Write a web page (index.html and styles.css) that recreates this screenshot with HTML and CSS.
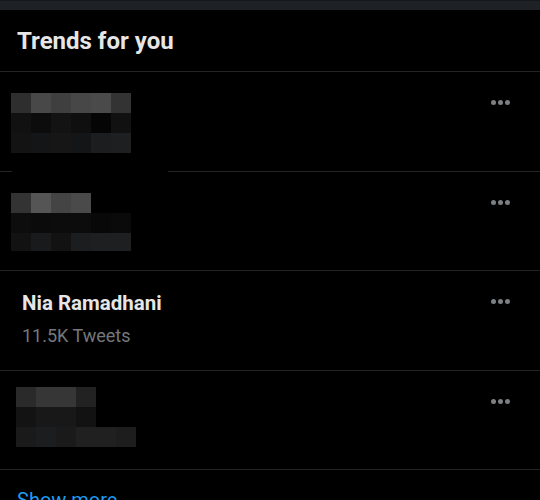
FILE: index.html
```html
<!DOCTYPE html>
<html>
<head>
<meta charset="utf-8">
<link rel="stylesheet" href="styles.css">
</head>
<body>
<div class="topbar"></div>
<div class="header"><h2 class="title">Trends for you</h2></div>
<div class="divider"></div>

<div class="row">
  <div class="mosaic m1">
    <i class="s2e"></i><i class="s48"></i><i class="s3f"></i><i class="s47"></i><i class="s4a"></i><i class="s33"></i>
    <i class="s11"></i><i class="s0c"></i><i class="s13"></i><i class="s0f"></i><i class="s05"></i><i class="s11"></i>
    <i class="s13"></i><i class="s14"></i><i class="s16"></i><i class="s14"></i><i class="s1c"></i><i class="s1e"></i>
  </div>
  <div class="more"><span></span><span></span><span></span></div>
</div>
<div class="divider split"><i></i><i></i></div>

<div class="row">
  <div class="mosaic m2">
    <i class="s33"></i><i class="s55"></i><i class="s44"></i><i class="s4a"></i><i class="s00"></i><i class="s00"></i>
    <i class="s0d"></i><i class="s0b"></i><i class="s0c"></i><i class="s0c"></i><i class="s08"></i><i class="s0a"></i>
    <i class="s12"></i><i class="s19"></i><i class="s12"></i><i class="s1c"></i><i class="s1e"></i><i class="s1e"></i>
  </div>
  <div class="more"><span></span><span></span><span></span></div>
</div>
<div class="divider"></div>

<div class="row">
  <div class="trend">
    <div class="name">Nia Ramadhani</div>
    <div class="count">11.5K Tweets</div>
  </div>
  <div class="more"><span></span><span></span><span></span></div>
</div>
<div class="divider"></div>

<div class="row">
  <div class="mosaic m3">
    <i class="s2a"></i><i class="s36"></i><i class="s36"></i><i class="s22"></i><i class="s00"></i><i class="s00"></i>
    <i class="s13"></i><i class="s18"></i><i class="s18"></i><i class="s12"></i><i class="s00"></i><i class="s00"></i>
    <i class="s1a"></i><i class="s1c"></i><i class="s1a"></i><i class="s20"></i><i class="s20"></i><i class="s1d"></i>
  </div>
  <div class="more"><span></span><span></span><span></span></div>
</div>
<div class="divider"></div>

<div class="footer"><a class="show-more">Show more</a></div>
</body>
</html>
```
FILE: styles.css
```css
html, body {
  margin: 0;
  padding: 0;
  background: #000;
  font-family: Roboto, "Liberation Sans", Arial, sans-serif;
  overflow: hidden;
}
.topbar {
  height: 9px;
  background: #1e2126;
  border-top: 1px solid #15181b;
}
.header {
  height: 61px;
  display: flex;
  align-items: center;
  padding-left: 17px;
}
.title {
  margin: 0;
  font-size: 24px;
  font-weight: 700;
  color: #e6e6e6;
}
.divider {
  height: 1px;
  background: #222528;
}
.divider.split {
  display: flex;
  justify-content: space-between;
  background: transparent;
}
.divider.split i {
  display: block;
  height: 1px;
  background: #222528;
}
.divider.split i:first-child { width: 12px; }
.divider.split i:last-child { width: 372px; }
.row {
  height: 98.5px;
  display: flex;
  justify-content: space-between;
  align-items: flex-start;
}
.mosaic {
  display: grid;
  grid-template-columns: repeat(6, 20px);
  grid-template-rows: 20px 20px 20px;
}
.mosaic i { display: block; }
.m1 { margin: 21px 0 0 11px; }
.m2 { margin: 21.5px 0 0 11px; grid-template-rows: 20px 20px 18px; }
.m3 { margin: 16.5px 0 0 16px; }
.s00 { background: #000; }
.s05 { background: #050505; }
.s08 { background: #080809; }
.s0a { background: #0a0a0b; }
.s0b { background: #0b0b0c; }
.s0c { background: #0c0c0d; }
.s0d { background: #0d0d0e; }
.s0f { background: #0f0f10; }
.s11 { background: #111112; }
.s12 { background: #121213; }
.s13 { background: #131314; }
.s14 { background: #141516; }
.s16 { background: #161617; }
.s18 { background: #181818; }
.s19 { background: #191a1b; }
.s1a { background: #1a1a1a; }
.s1c { background: #1c1d1e; }
.s1d { background: #1d1d1d; }
.s1e { background: #1e1f20; }
.s20 { background: #202020; }
.s22 { background: #222222; }
.s2a { background: #2a2a2a; }
.s2e { background: #2e2e2e; }
.s33 { background: #333333; }
.s36 { background: #363636; }
.s3f { background: #3f3f3f; }
.s44 { background: #444444; }
.s47 { background: #474747; }
.s48 { background: #484848; }
.s4a { background: #4a4a4a; }
.s55 { background: #555555; }
.more {
  display: flex;
  gap: 2px;
  margin: 28px 30px 0 0;
}
.more span {
  display: block;
  width: 5px;
  height: 5px;
  border-radius: 50%;
  background: #7d8083;
}
.trend {
  padding: 20px 0 0 22px;
}
.name {
  font-size: 20.5px;
  font-weight: 700;
  color: #e6e6e6;
  line-height: 24px;
}
.count {
  margin-top: 9px;
  font-size: 18px;
  color: #74787c;
  line-height: 23px;
}
.footer {
  padding: 18px 0 0 17px;
}
.show-more {
  font-size: 20px;
  line-height: 24px;
  color: #1d9bf0;
}
```
